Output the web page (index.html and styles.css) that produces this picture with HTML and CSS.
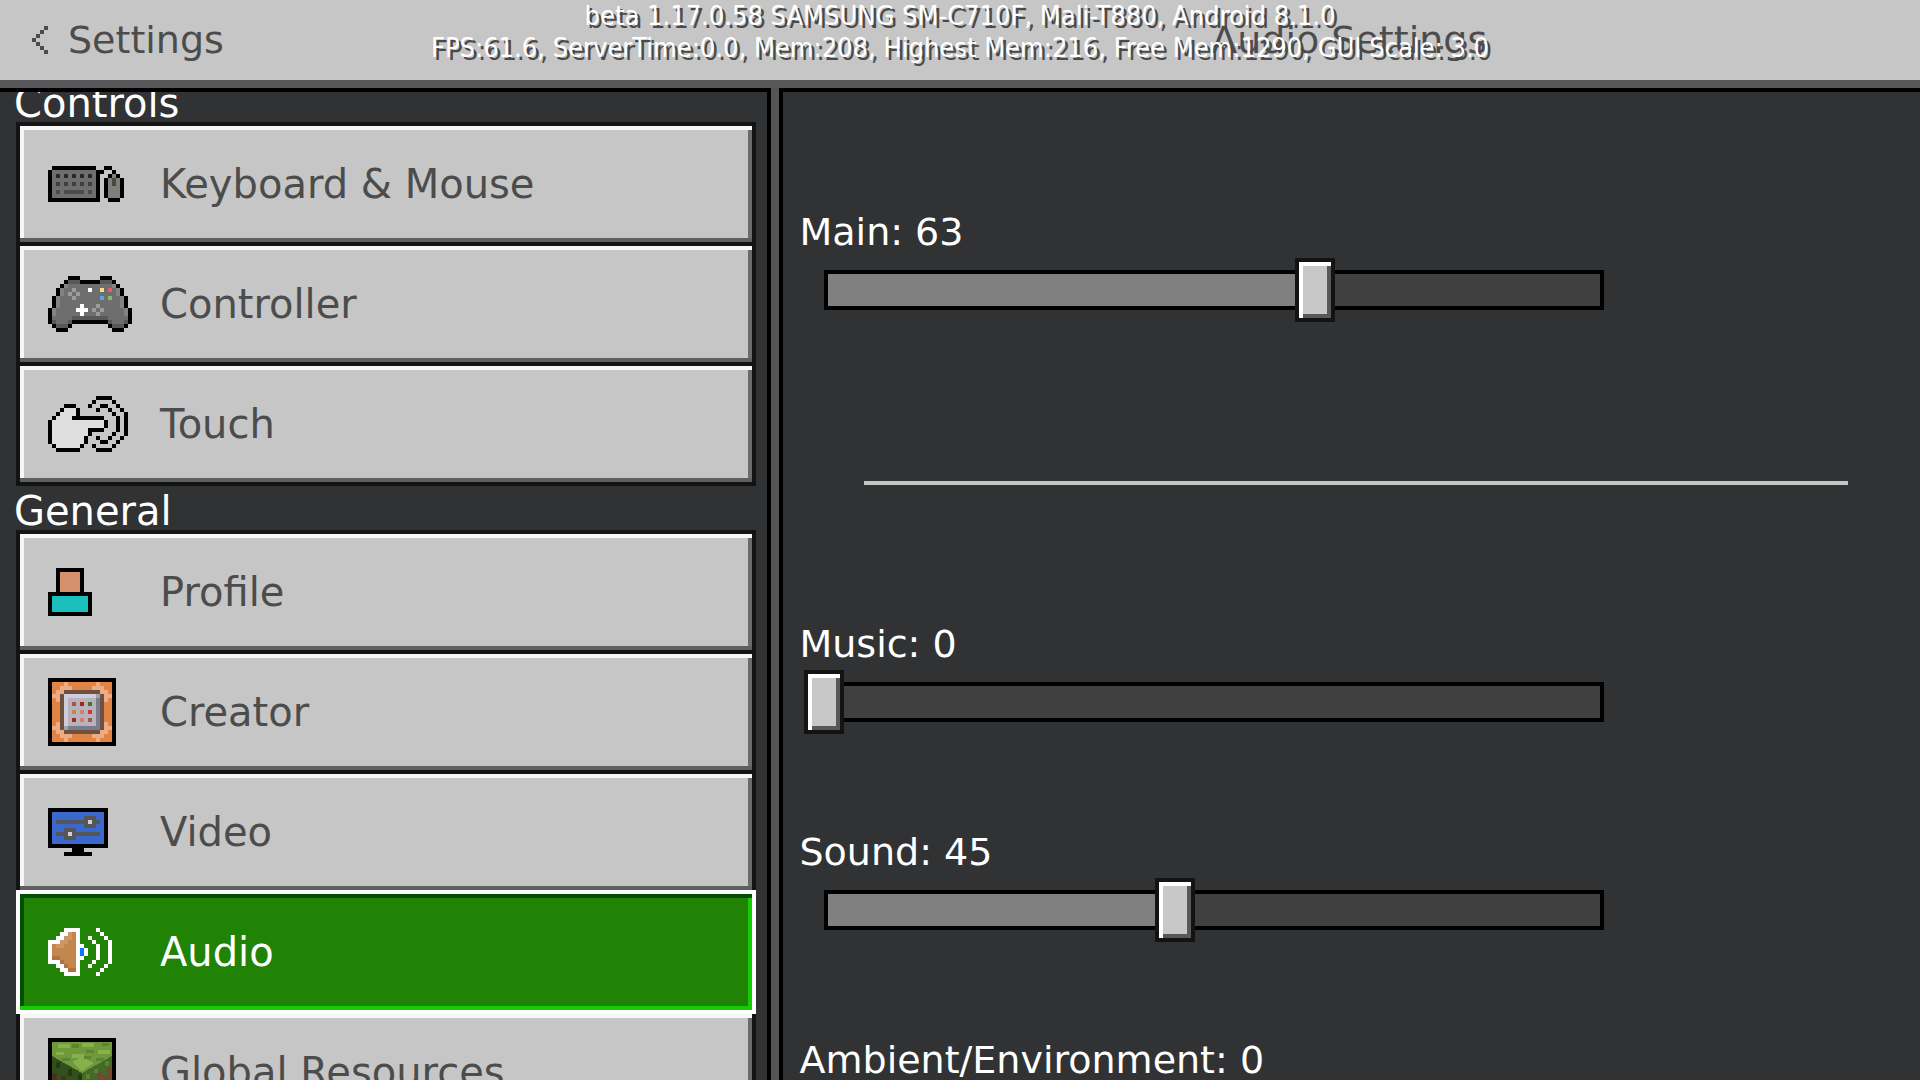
FILE: index.html
```html
<!DOCTYPE html>
<html lang="en">
<head>
  <meta charset="UTF-8" />
  <title>Audio Settings</title>
  <link rel="stylesheet" href="styles.css">
</head>
<body>
  <header class="topbar">
    <button class="back-btn" type="button">
      <svg class="pixel" width="16" height="28" viewBox="0 -0.5 4 7"><path stroke="#4c4c4c" d="M3 0h1M2 1h1M1 2h1M0 3h1M1 4h1M2 5h1M3 6h1"/></svg>
      Settings
    </button>
    <h1>Audio Settings</h1>
    <div class="debug">
      <p>beta 1.17.0.58 SAMSUNG SM-C710F, Mali-T880, Android 8.1.0</p>
      <p>FPS:61.6, ServerTime:0.0, Mem:208, Highest Mem:216, Free Mem:1290, GUI Scale: 3.0</p>
    </div>
  </header>

  <main>
    <nav class="panel sidebar">
      <h2>Controls</h2>
      <button class="item" type="button">
        <span class="icon">
          <svg class="pixel" width="76" height="36" viewBox="0 -0.5 19 9">
            <path stroke="#6e6e6e" d="M1 1h11M1 2h11M1 3h11M1 4h11M1 5h11M1 6h11M1 7h11"/>
            <path stroke="#2a2a2a" d="M2 2h1M4 2h1M6 2h1M8 2h1M10 2h1"/>
            <path stroke="#3f3f3f" d="M2 4h1M4 4h1M6 4h1M8 4h1M10 4h1"/>
            <path stroke="#4b4b4b" d="M2 6h1M4 6h5M10 6h1"/>
            <path stroke="#807e79" d="M16 2h1M15 3h3M15 4h3M15 5h3M15 6h3M15 7h3"/>
            <path stroke="#4a4845" d="M16 3h1M16 4h1"/>
            <path stroke="#000" d="M1 0h11M14 0h2M0 1h1M12 1h2M16 1h1M0 2h1M12 2h1M15 2h1M17 2h1M0 3h1M12 3h1M14 3h1M18 3h1M0 4h1M12 4h1M14 4h1M18 4h1M0 5h1M12 5h1M14 5h1M18 5h1M0 6h1M12 6h1M14 6h1M18 6h1M0 7h1M12 7h1M14 7h1M18 7h1M0 8h13M15 8h3"/>
          </svg>
        </span>
        Keyboard &amp; Mouse
      </button>
      <button class="item" type="button">
        <span class="icon">
          <svg class="pixel" width="84" height="56" viewBox="0 -0.5 21 14">
            <path stroke="#6e6e6e" d="M5 1h3M13 1h3M4 2h13M3 3h15M3 4h15M2 5h17M2 6h17M2 7h17M1 8h19M1 9h19M1 10h19M1 11h5M15 11h5M2 12h3M16 12h3"/>
            <path stroke="#858283" d="M4 2h1M16 2h1M3 3h1M17 3h1M3 4h1M17 4h1M2 5h1M18 5h1M2 6h1M18 6h1M2 7h1M18 7h1M1 8h1M19 8h1M1 9h1M19 9h1"/>
            <path stroke="#585858" d="M5 1h3M13 1h3M6 10h9M1 11h1M5 11h1M15 11h1M19 11h1M2 12h3M16 12h3"/>
            <path stroke="#9a9c9e" d="M6 3h1M5 4h1M7 4h1M6 5h1M12 7h1M11 8h1M13 8h1M12 9h1"/>
            <path stroke="#fff" d="M10 3h1M8 7h1M7 8h3M8 9h1"/>
            <path stroke="#f0e27a" d="M13 3h1"/>
            <path stroke="#ec5a70" d="M15 3h1"/>
            <path stroke="#50a8e0" d="M13 5h1"/>
            <path stroke="#8ab872" d="M15 5h1"/>
            <path stroke="#000" d="M5 0h3M13 0h3M4 1h1M8 1h5M16 1h1M3 2h1M17 2h1M2 3h1M18 3h1M2 4h1M18 4h1M1 5h1M19 5h1M1 6h1M19 6h1M1 7h1M19 7h1M0 8h1M20 8h1M0 9h1M20 9h1M0 10h1M20 10h1M0 11h1M6 11h9M20 11h1M1 12h1M5 12h1M15 12h1M19 12h1M2 13h3M16 13h3"/>
          </svg>
        </span>
        Controller
      </button>
      <button class="item" type="button">
        <span class="icon">
          <svg class="pixel" width="80" height="56" viewBox="0 -0.5 20 14">
            <path stroke="#dedede" d="M4 3h3M3 4h4M2 5h4M1 6h13M1 7h13M1 8h9M1 9h9M1 10h8M1 11h8M2 12h6"/>
            <path stroke="#000" d="M12 0h4M11 1h1M16 1h1M4 2h3M10 2h1M13 2h2M17 2h1M3 3h1M7 3h1M12 3h1M15 3h1M18 3h1M2 4h1M7 4h1M16 4h1M19 4h1M1 5h1M6 5h8M17 5h1M19 5h1M0 6h1M14 6h1M17 6h1M19 6h1M0 7h1M14 7h1M17 7h1M19 7h1M0 8h1M10 8h4M17 8h1M19 8h1M0 9h1M10 9h1M16 9h1M19 9h1M0 10h1M9 10h1M12 10h1M15 10h1M18 10h1M0 11h1M9 11h1M13 11h2M17 11h1M1 12h1M8 12h1M11 12h1M16 12h1M2 13h6M12 13h4"/>
          </svg>
        </span>
        Touch
      </button>

      <h2>General</h2>
      <button class="item" type="button">
        <span class="icon">
          <svg class="pixel" width="44" height="48" viewBox="0 0 11 12">
            <path fill="#000" d="M2 0h7v6h2v6H0V6h2z"/>
            <path fill="#d4916c" d="M3 1h5v5H3z"/>
            <path fill="#18bfbc" d="M1 7h9v4H1z"/>
          </svg>
        </span>
        Profile
      </button>
      <button class="item" type="button">
        <span class="icon">
          <svg class="pixel" width="68" height="68" viewBox="0 0 17 17">
            <path fill="#000" d="M0 0h17v17H0z"/>
            <path fill="#e08344" d="M1 1h15v15H1z"/>
            <path fill="#ecad86" d="M4 1h1v1h1v1H4v1H3v2H2V5H1V4h1V3h1V2h1zM12 1h1v1h1v1h1v1h1v1h-1v1h-1V4h-1V3h-2V2h1zM4 16h1v-1h1v-1H4v-1H3v-2H2v1H1v1h1v1h1v1h1zM12 16h1v-1h1v-1h1v-1h1v-1h-1v-1h-1v2h-1v1h-2v1h1z"/>
            <path fill="#6e523f" d="M4 3h9v1h1v9h-1v1H4v-1H3V4h1z"/>
            <path fill="#7c7b8b" d="M4 4h9v9H4z"/>
            <path fill="#cfccdb" d="M4 4h8v1H5v7H4z"/>
            <path fill="#a3a2af" d="M12 4h1v1h-1zM4 12h1v1H4z"/>
            <path fill="#b6b3bb" d="M5 5h7v7H5z"/>
            <path fill="#ad5050" d="M6 6h1v1H6zM10 10h1v1h-1z"/>
            <path fill="#a82226" d="M8 6h1v1H8zM6 10h1v1H6z"/>
            <path fill="#4c7226" d="M10 6h1v1h-1z"/>
            <path fill="#c98a38" d="M6 8h1v1H6z"/>
            <path fill="#da7a78" d="M8 8h1v1H8zM8 10h1v1H8z"/>
            <path fill="#d83438" d="M10 8h1v1h-1z"/>
          </svg>
        </span>
        Creator
      </button>
      <button class="item" type="button">
        <span class="icon">
          <svg class="pixel" width="60" height="48" viewBox="0 0 15 12">
            <path fill="#000" d="M0 0h15v10H9v1h2v1H4v-1h2v-1H0z"/>
            <path fill="#3a68cd" d="M1 1h13v8H1z"/>
            <path fill="#55565a" d="M2 3h7V2h3v1h1v1h-1v1H9V4H2zM2 6h2V5h3v1h6v1H7v1H4V7H2z"/>
            <path fill="#d0d0d4" d="M10 3h1v1h-1zM5 6h1v1H5z"/>
          </svg>
        </span>
        Video
      </button>
      <button class="item selected" type="button">
        <span class="icon">
          <svg class="pixel" width="64" height="48" viewBox="0 -0.5 16 12">
            <path stroke="#c4864f" d="M5 1h2M4 2h3M3 3h4M1 4h6M1 5h6M1 6h6M1 7h6M3 8h4M4 9h3M5 10h2"/>
            <path stroke="#cb9668" d="M5 1h1M5 2h1M4 2h1M3 3h2M2 4h2"/>
            <path stroke="#b0743f" d="M1 7h2M3 8h1M4 9h1M5 10h2"/>
            <path stroke="#0e78ff" d="M8 5h1M8 6h1"/>
            <path stroke="#fff" d="M4 0h4M12 0h1M3 1h2M7 1h1M13 1h1M2 2h2M7 2h1M10 2h1M14 2h1M0 3h3M7 3h1M11 3h1M15 3h1M0 4h1M7 4h2M12 4h1M15 4h1M0 5h1M7 5h1M9 5h1M12 5h1M15 5h1M0 6h1M7 6h1M9 6h1M12 6h1M15 6h1M0 7h1M7 7h2M12 7h1M15 7h1M0 8h3M7 8h1M11 8h1M15 8h1M2 9h2M7 9h1M10 9h1M14 9h1M3 10h2M7 10h1M13 10h1M4 11h4M12 11h1"/>
          </svg>
        </span>
        Audio
      </button>
      <button class="item" type="button">
        <span class="icon">
          <svg class="pixel" width="68" height="68" viewBox="0 0 68 68">
            <path fill="#000" d="M0 0h68v68H0z"/>
            <path fill="#6f9a3c" d="M4 4h60v60H4z"/>
            <path fill="#85b04a" d="M10 6h12v4H10zM34 5h12v4H34zM50 12h12v4H50zM24 16h12v4H24zM8 14h8v3H8zM24 24l10-5 12 6-12 8z"/>
            <path fill="#5c8531" d="M24 6h7v4h-7zM38 12h8v3h-8zM14 20h8v3h-8zM48 20h8v3h-8zM54 5h7v3h-7zM36 18h7v3h-7z"/>
            <path fill="#4b2f20" d="M4 18l30 17v29H4z"/>
            <path fill="#6c4a34" d="M34 35l30-17v46H34z"/>
            <path fill="#31501b" d="M4 18l30 17v14h-5v-6h-5v5h-6v-10h-5v4H9v-7H4z"/>
            <path fill="#456a26" d="M34 35l30-17v12h-5v7h-5v-3h-5v9h-6v-3h-4v9h-5z"/>
            <path fill="#233b13" d="M8 24h4v6H8zM20 31h4v7h-4zM30 36h4v8h-4z"/>
            <path fill="#5b8232" d="M38 36h4v5h-4zM46 31h4v4h-4zM57 23h4v5h-4z"/>
          </svg>
        </span>
        Global Resources
      </button>
    </nav>

    <section class="panel options">
      <div class="setting">
        <label for="main">Main: 63</label>
        <input type="range" id="main" min="0" max="100" value="63" style="--value: 63">
      </div>
      <hr>
      <div class="setting">
        <label for="music">Music: 0</label>
        <input type="range" id="music" min="0" max="100" value="0" style="--value: 0">
      </div>
      <div class="setting">
        <label for="sound">Sound: 45</label>
        <input type="range" id="sound" min="0" max="100" value="45" style="--value: 45">
      </div>
      <div class="setting">
        <label for="ambient">Ambient/Environment: 0</label>
        <input type="range" id="ambient" min="0" max="100" value="0" style="--value: 0">
      </div>
    </section>
  </main>
</body>
</html>
```
FILE: styles.css
```css
* {
  box-sizing: border-box;
}

body {
  margin: 0;
  height: 100vh;
  display: flex;
  flex-direction: column;
  overflow: hidden;
  background: #545456;
  color: white;
  font-family: "DejaVu Sans", sans-serif;
  font-size: 38px;
  line-height: 44px;
}

h1, h2, p {
  margin: 0;
  font-size: inherit;
  font-weight: normal;
}

button {
  font: inherit;
  cursor: pointer;
}

.pixel {
  display: block;
  shape-rendering: crispEdges;
}

.topbar {
  position: relative;
  flex: none;
  height: 88px;
  display: grid;
  grid-template-columns: 27fr 40fr;
  column-gap: 8px;
  align-items: center;
  background: #c6c6c6;
  border-bottom: 8px solid #58585a;
  color: #4c4c4c;
}

.topbar h1 {
  text-align: center;
}

.back-btn {
  display: flex;
  align-items: center;
  gap: 20px;
  padding: 0 32px;
  background: none;
  border: none;
  color: #4c4c4c;
}

/* debug readout lies over the header */
.debug {
  position: absolute;
  top: 0;
  left: 0;
  right: 0;
  text-align: center;
  font-family: "DejaVu Sans Condensed", "DejaVu Sans", sans-serif;
  font-size: 27px;
  line-height: 32px;
  color: white;
  text-shadow: 3px 3px 0 #4a4a4a;
  white-space: nowrap;
  pointer-events: none;
}

main {
  flex: 1;
  min-height: 0;
  display: grid;
  grid-template-columns: 27fr 40fr;
  column-gap: 8px;
}

.panel {
  min-height: 0;
  overflow: hidden;
  background: #313233;
  border-top: 4px solid #000;
}

.sidebar {
  border-right: 4px solid #000;
  padding: 0 11px 0 16px;
  font-size: 40px;
}

.sidebar h2 {
  height: 44px;
  line-height: 50px;
  margin-left: -2px;
}

/* list is scrolled down a little */
.sidebar h2:first-child {
  margin-top: -14px;
}

.item {
  position: relative;
  display: flex;
  align-items: center;
  width: 100%;
  height: 124px;
  padding: 0 28px;
  background: #c6c6c6;
  border: 4px solid #131313;
  box-shadow: inset 0 4px #f7f7f7, inset 0 -4px #5e5f5f, inset 4px 0 #f7f7f7, inset -4px 0 #6a6b6b;
  color: #4c4c4c;
  text-align: left;
}

.item + .item {
  margin-top: -4px;
}

.item.selected {
  z-index: 1;
  background: #208306;
  border-color: #fff;
  box-shadow: inset 0 4px #024e02, inset 0 -4px #15cc05, inset 4px 0 #024e02, inset -4px 0 #15cc05;
  color: white;
}

.icon {
  flex: none;
  width: 112px;
}

.options {
  border-left: 4px solid #000;
  padding: 118px 27px 0 17px;
}

.setting {
  margin-bottom: 96px;
}

.setting label {
  display: block;
}

.options hr {
  height: 4px;
  margin: 159px 45px 137px 64px;
  border: none;
  background: #c4c6c6;
}

.setting:has(+ hr) {
  margin-bottom: 0;
}

input[type="range"] {
  -webkit-appearance: none;
  appearance: none;
  display: block;
  width: 75%;
  height: 64px;
  margin: 4px 0 0 4px;
  background:
    linear-gradient(#808080, #808080) 24px 50% / calc((100% - 40px) * var(--value) / 100 - 4px) 32px no-repeat,
    linear-gradient(#404040, #404040) 50% 50% / calc(100% - 48px) 32px no-repeat,
    linear-gradient(#000, #000) 50% 50% / calc(100% - 40px) 40px no-repeat;
}

input[type="range"]::-webkit-slider-thumb {
  -webkit-appearance: none;
  width: 40px;
  height: 64px;
  background: #c8c8c8;
  border: 4px solid #131313;
  box-shadow: inset 0 4px #fff, inset 4px 0 #fff, inset 0 -4px #58585a, inset -4px 0 #58585a;
}
```
